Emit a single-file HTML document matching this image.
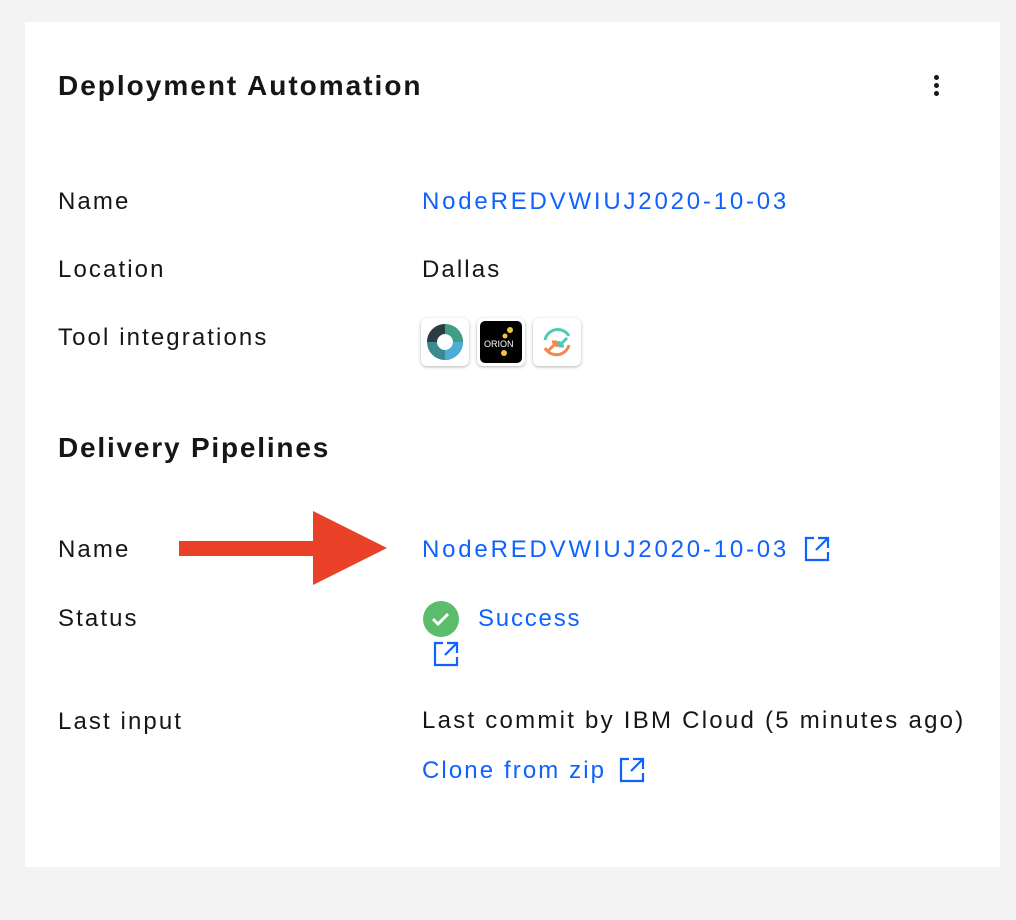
<!DOCTYPE html>
<html><head><meta charset="utf-8"><style>
*{margin:0;padding:0;box-sizing:border-box}
body{width:1016px;height:920px;background:#f3f3f3;position:relative;overflow:hidden;font-family:"Liberation Sans",sans-serif;color:#161616}
.card{position:absolute;left:25px;top:22px;width:975px;height:845px;background:#fff}
.t{position:absolute;white-space:nowrap;font-size:24px;line-height:30px;letter-spacing:2.1px}
.h{font-weight:bold;font-size:28px;letter-spacing:2px}
.l{color:#0f62fe}
.n{letter-spacing:2.8px}
.ic{position:absolute;width:48px;height:48px;border-radius:6px;background:#fff;box-shadow:0 1px 3px rgba(0,0,0,.3)}
</style></head><body>
<div class="card"></div>
<div class="t h" style="left:58px;top:71px">Deployment Automation</div>
<div style="position:absolute;left:934px;top:75px;width:5px;height:5px;border-radius:50%;background:#161616"></div>
<div style="position:absolute;left:934px;top:83px;width:5px;height:5px;border-radius:50%;background:#161616"></div>
<div style="position:absolute;left:934px;top:91px;width:5px;height:5px;border-radius:50%;background:#161616"></div>

<div class="t" style="left:58px;top:187px">Name</div>
<div class="t l n" style="left:422px;top:187px">NodeREDVWIUJ2020-10-03</div>
<div class="t" style="left:58px;top:255px">Location</div>
<div class="t" style="left:422px;top:255px">Dallas</div>
<div class="t" style="left:58px;top:323px">Tool integrations</div>

<div class="ic" style="left:421px;top:318px"><svg width="48" height="48" viewBox="0 0 48 48"><circle cx="24" cy="24" r="13" fill="none" stroke="#3a8a8f" stroke-width="10"/><path d="M24 11A13 13 0 0 1 37 24" fill="none" stroke="#3f9e84" stroke-width="10"/><path d="M37 24A13 13 0 0 1 24 37" fill="none" stroke="#4aaed8" stroke-width="10"/><path d="M11 24A13 13 0 0 1 24 11" fill="none" stroke="#2c3c45" stroke-width="10"/></svg></div>
<div class="ic" style="left:477px;top:318px"><svg width="48" height="48" viewBox="0 0 48 48"><rect x="3" y="3" width="42" height="42" rx="5" fill="#000"/><text x="7" y="29" font-family="Liberation Sans" font-size="9" fill="#fff">ORION</text><circle cx="33" cy="12" r="3" fill="#f5c342"/><circle cx="28" cy="18" r="2.5" fill="#f5c342"/><circle cx="27" cy="35" r="3" fill="#f5c342"/></svg></div>
<div class="ic" style="left:533px;top:318px"><svg width="48" height="48" viewBox="0 0 48 48"><path d="M12 22A13 13 0 0 1 36 18" fill="none" stroke="#4ccab4" stroke-width="3"/><path d="M36 27A13 13 0 0 1 12 30" fill="none" stroke="#f4874b" stroke-width="3"/><path d="M14 34L24 24M24 24h-5M24 24v5" stroke="#f4874b" stroke-width="3" fill="none"/><path d="M34 20L26 28M26 28h5M26 28v-5" stroke="#4ccab4" stroke-width="3" fill="none"/></svg></div>

<div class="t h" style="left:58px;top:433px;letter-spacing:1.8px">Delivery Pipelines</div>

<div class="t" style="left:58px;top:535px">Name</div>
<svg style="position:absolute;left:179px;top:511px" width="210" height="75"><rect x="0" y="30" width="136" height="15" fill="#e84128"/><polygon points="134,0 208,37 134,74" fill="#e84128"/></svg>
<div class="t l n" style="left:422px;top:535px">NodeREDVWIUJ2020-10-03</div>
<svg style="position:absolute;left:804px;top:536px" width="26" height="26" viewBox="0 0 26 26" fill="none" stroke="#0f62fe" stroke-width="2.2"><path d="M10 2H2V24H24V16M14 2H24V12M24 2L12 14"/></svg>

<div class="t" style="left:58px;top:604px">Status</div>
<svg style="position:absolute;left:423px;top:601px" width="36" height="36"><circle cx="18" cy="18" r="18" fill="#5bbd6b"/><path d="M10 18l5 5 10-10" stroke="#fff" stroke-width="3" fill="none"/></svg>
<div class="t l" style="left:478px;top:604px;letter-spacing:1.8px">Success</div>
<svg style="position:absolute;left:433px;top:641px" width="26" height="26" viewBox="0 0 26 26" fill="none" stroke="#0f62fe" stroke-width="2.2"><path d="M10 2H2V24H24V16M14 2H24V12M24 2L12 14"/></svg>

<div class="t" style="left:58px;top:707px">Last input</div>
<div class="t" style="left:422px;top:706px;letter-spacing:2.25px">Last commit by IBM Cloud (5 minutes ago)</div>
<div class="t l" style="left:422px;top:756px">Clone from zip</div>
<svg style="position:absolute;left:619px;top:757px" width="26" height="26" viewBox="0 0 26 26" fill="none" stroke="#0f62fe" stroke-width="2.2"><path d="M10 2H2V24H24V16M14 2H24V12M24 2L12 14"/></svg>
</body></html>
